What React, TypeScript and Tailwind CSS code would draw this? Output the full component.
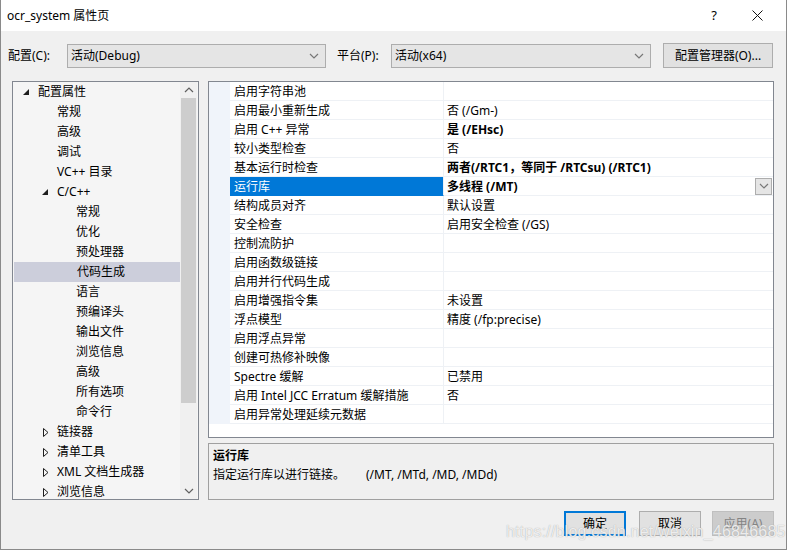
import React from "react";

const FONT = '"Segoe UI", "Noto Sans", "Noto Sans CJK SC", sans-serif';

type TreeItem = { label: string; level: 1 | 2 | 3; arrow?: "open" | "closed"; selected?: boolean };

const tree: TreeItem[] = [
  { label: "配置属性", level: 1, arrow: "open" },
  { label: "常规", level: 2 },
  { label: "高级", level: 2 },
  { label: "调试", level: 2 },
  { label: "VC++ 目录", level: 2 },
  { label: "C/C++", level: 2, arrow: "open" },
  { label: "常规", level: 3 },
  { label: "优化", level: 3 },
  { label: "预处理器", level: 3 },
  { label: "代码生成", level: 3, selected: true },
  { label: "语言", level: 3 },
  { label: "预编译头", level: 3 },
  { label: "输出文件", level: 3 },
  { label: "浏览信息", level: 3 },
  { label: "高级", level: 3 },
  { label: "所有选项", level: 3 },
  { label: "命令行", level: 3 },
  { label: "链接器", level: 2, arrow: "closed" },
  { label: "清单工具", level: 2, arrow: "closed" },
  { label: "XML 文档生成器", level: 2, arrow: "closed" },
  { label: "浏览信息", level: 2, arrow: "closed" },
];

const levelPad = { 1: "pl-[10px]", 2: "pl-[29px]", 3: "pl-[48px]" };

const props: { name: string; value: string; bold?: boolean; selected?: boolean }[] = [
  { name: "启用字符串池", value: "" },
  { name: "启用最小重新生成", value: "否 (/Gm-)" },
  { name: "启用 C++ 异常", value: "是 (/EHsc)", bold: true },
  { name: "较小类型检查", value: "否" },
  { name: "基本运行时检查", value: "两者(/RTC1，等同于 /RTCsu) (/RTC1)", bold: true },
  { name: "运行库", value: "多线程 (/MT)", bold: true, selected: true },
  { name: "结构成员对齐", value: "默认设置" },
  { name: "安全检查", value: "启用安全检查 (/GS)" },
  { name: "控制流防护", value: "" },
  { name: "启用函数级链接", value: "" },
  { name: "启用并行代码生成", value: "" },
  { name: "启用增强指令集", value: "未设置" },
  { name: "浮点模型", value: "精度 (/fp:precise)" },
  { name: "启用浮点异常", value: "" },
  { name: "创建可热修补映像", value: "" },
  { name: "Spectre 缓解", value: "已禁用" },
  { name: "启用 Intel JCC Erratum 缓解措施", value: "否" },
  { name: "启用异常处理延续元数据", value: "" },
];

function Chevron({ up = false, color = "#606060" }: { up?: boolean; color?: string }) {
  return (
    <svg width="10" height="6" viewBox="0 0 10 6">
      <polyline
        points={up ? "1,5 5,1 9,5" : "1,1 5,5 9,1"}
        fill="none"
        stroke={color}
        strokeWidth="1.2"
      />
    </svg>
  );
}

function Combo({ text, width }: { text: string; width: string }) {
  return (
    <div className={`${width} h-[24px] flex items-center justify-between bg-[#e5e5e5] border border-[#adadad] pl-[3px] pr-[6px]`}>
      <span>{text}</span>
      <Chevron color="#777" />
    </div>
  );
}

export default function App() {
  return (
    <div
      className="relative w-[787px] h-[550px] flex flex-col bg-[#f0f0f0] border-l border-r border-b border-[#8a8a8a] text-[12px] text-black overflow-hidden"
      style={{ fontFamily: FONT }}
    >
      {/* title bar */}
      <div className="h-[31px] bg-white flex items-center pl-[6px]">
        <span className="text-[12px]">ocr_system 属性页</span>
        <span className="ml-auto text-[13px] mr-[35px]">?</span>
        <svg width="11" height="11" viewBox="0 0 11 11" className="mr-[23px]">
          <line x1="0.5" y1="0.5" x2="10.5" y2="10.5" stroke="#111" strokeWidth="1" />
          <line x1="10.5" y1="0.5" x2="0.5" y2="10.5" stroke="#111" strokeWidth="1" />
        </svg>
      </div>

      {/* config row */}
      <div className="mt-[12px] h-[24px] flex items-center pl-[7px] pt-[1px]">
        <span className="w-[59px]">配置(C):</span>
        <Combo text="活动(Debug)" width="w-[259px]" />
        <span className="ml-[11px] w-[54px]">平台(P):</span>
        <Combo text="活动(x64)" width="w-[260px]" />
        <div className="ml-[12px] w-[110px] h-[25px] flex items-center justify-center bg-[#e1e1e1] border border-[#adadad]">
          配置管理器(O)...
        </div>
      </div>

      {/* main */}
      <div className="mt-[14px] flex h-[419px]">
        {/* tree */}
        <div className="ml-[11px] w-[187px] h-full border border-[#828790] bg-[#f5f5f5] flex">
          <div className="flex-1 flex flex-col">
            {tree.map((t, i) => (
              <div
                key={i}
                className={`h-[20px] shrink-0 flex items-center ${levelPad[t.level]} ${t.selected ? "bg-[#cccedb] ml-[1px]" : ""}`}
              >
                <span className="w-[15px] flex items-center">
                  {t.arrow === "open" && (
                    <svg width="6" height="6" viewBox="0 0 6 6">
                      <polygon points="6,0 6,6 0,6" fill="#1e1e1e" />
                    </svg>
                  )}
                  {t.arrow === "closed" && (
                    <svg width="6" height="9" viewBox="0 0 6 9" className="ml-[1px]">
                      <polygon points="0.5,0.5 5,4.5 0.5,8.5" fill="none" stroke="#1e1e1e" strokeWidth="1" />
                    </svg>
                  )}
                </span>
                <span>{t.label}</span>
              </div>
            ))}
          </div>
          <div className="w-[17px] mr-[1px] flex flex-col bg-[#f0f0f0]">
            <div className="h-[16px] flex items-center justify-center">
              <Chevron up />
            </div>
            <div className="h-[305px] mx-[1px] bg-[#cdcdcd]" />
            <div className="flex-1" />
            <div className="h-[17px] flex items-center justify-center">
              <Chevron />
            </div>
          </div>
        </div>

        {/* right side */}
        <div className="ml-[9px] w-[566px] flex flex-col">
          <div className="h-[357px] border border-[#828790] bg-white flex flex-col">
            {props.map((p, i) => (
              <div key={i} className="h-[19px] shrink-0 flex">
                <div className="w-[21px] bg-[#f0f4fa]" />
                <div
                  className={`w-[214px] pl-[4px] pt-[2px] flex items-center border-b border-r border-[#eef1f5] ${p.selected ? "bg-[#0078d7] text-white border-b-[#0078d7]" : ""}`}
                >
                  {p.name}
                </div>
                <div className={`flex-1 pl-[3px] pt-[2px] flex items-center border-b border-[#eef1f5] ${p.bold ? "font-bold" : ""}`}>
                  <span>{p.value}</span>
                  {p.selected && (
                    <div className="ml-auto mr-[1px] -mt-[2px] w-[17px] h-[17px] bg-[#e5e5e5] border border-[#adadad] flex items-center justify-center">
                      <Chevron color="#777" />
                    </div>
                  )}
                </div>
              </div>
            ))}
          </div>
          <div className="mt-[5px] h-[57px] border border-[#a0a0a0] bg-[#f0f0f0] px-[4px] pt-[2px] leading-[19px]">
            <div className="font-bold">运行库</div>
            <div className="flex">
              <span className="w-[153px]">指定运行库以进行链接。</span>
              <span>(/MT, /MTd, /MD, /MDd)</span>
            </div>
          </div>
        </div>
      </div>

      {/* buttons */}
      <div className="mt-[11px] flex justify-end pr-[12px]">
        <div className="w-[62px] h-[25px] flex items-center justify-center bg-[#e1e1e1] border-2 border-[#0078d7]">确定</div>
        <div className="ml-[13px] w-[62px] h-[25px] flex items-center justify-center bg-[#e1e1e1] border border-[#adadad]">取消</div>
        <div className="ml-[11px] w-[62px] h-[25px] flex items-center justify-center bg-[#cccccc] border border-[#bfbfbf] text-[#838383]">应用(A)</div>
      </div>

      {/* watermark */}
      <div
        className="absolute left-[505px] top-[520px] text-[16px] text-white/80 tracking-[0.2px]"
        style={{ fontFamily: '"Liberation Sans", sans-serif', textShadow: "0 0 1px #999" }}
      >
        https://blog.csdn.net/weixin_46846685
      </div>
    </div>
  );
}
